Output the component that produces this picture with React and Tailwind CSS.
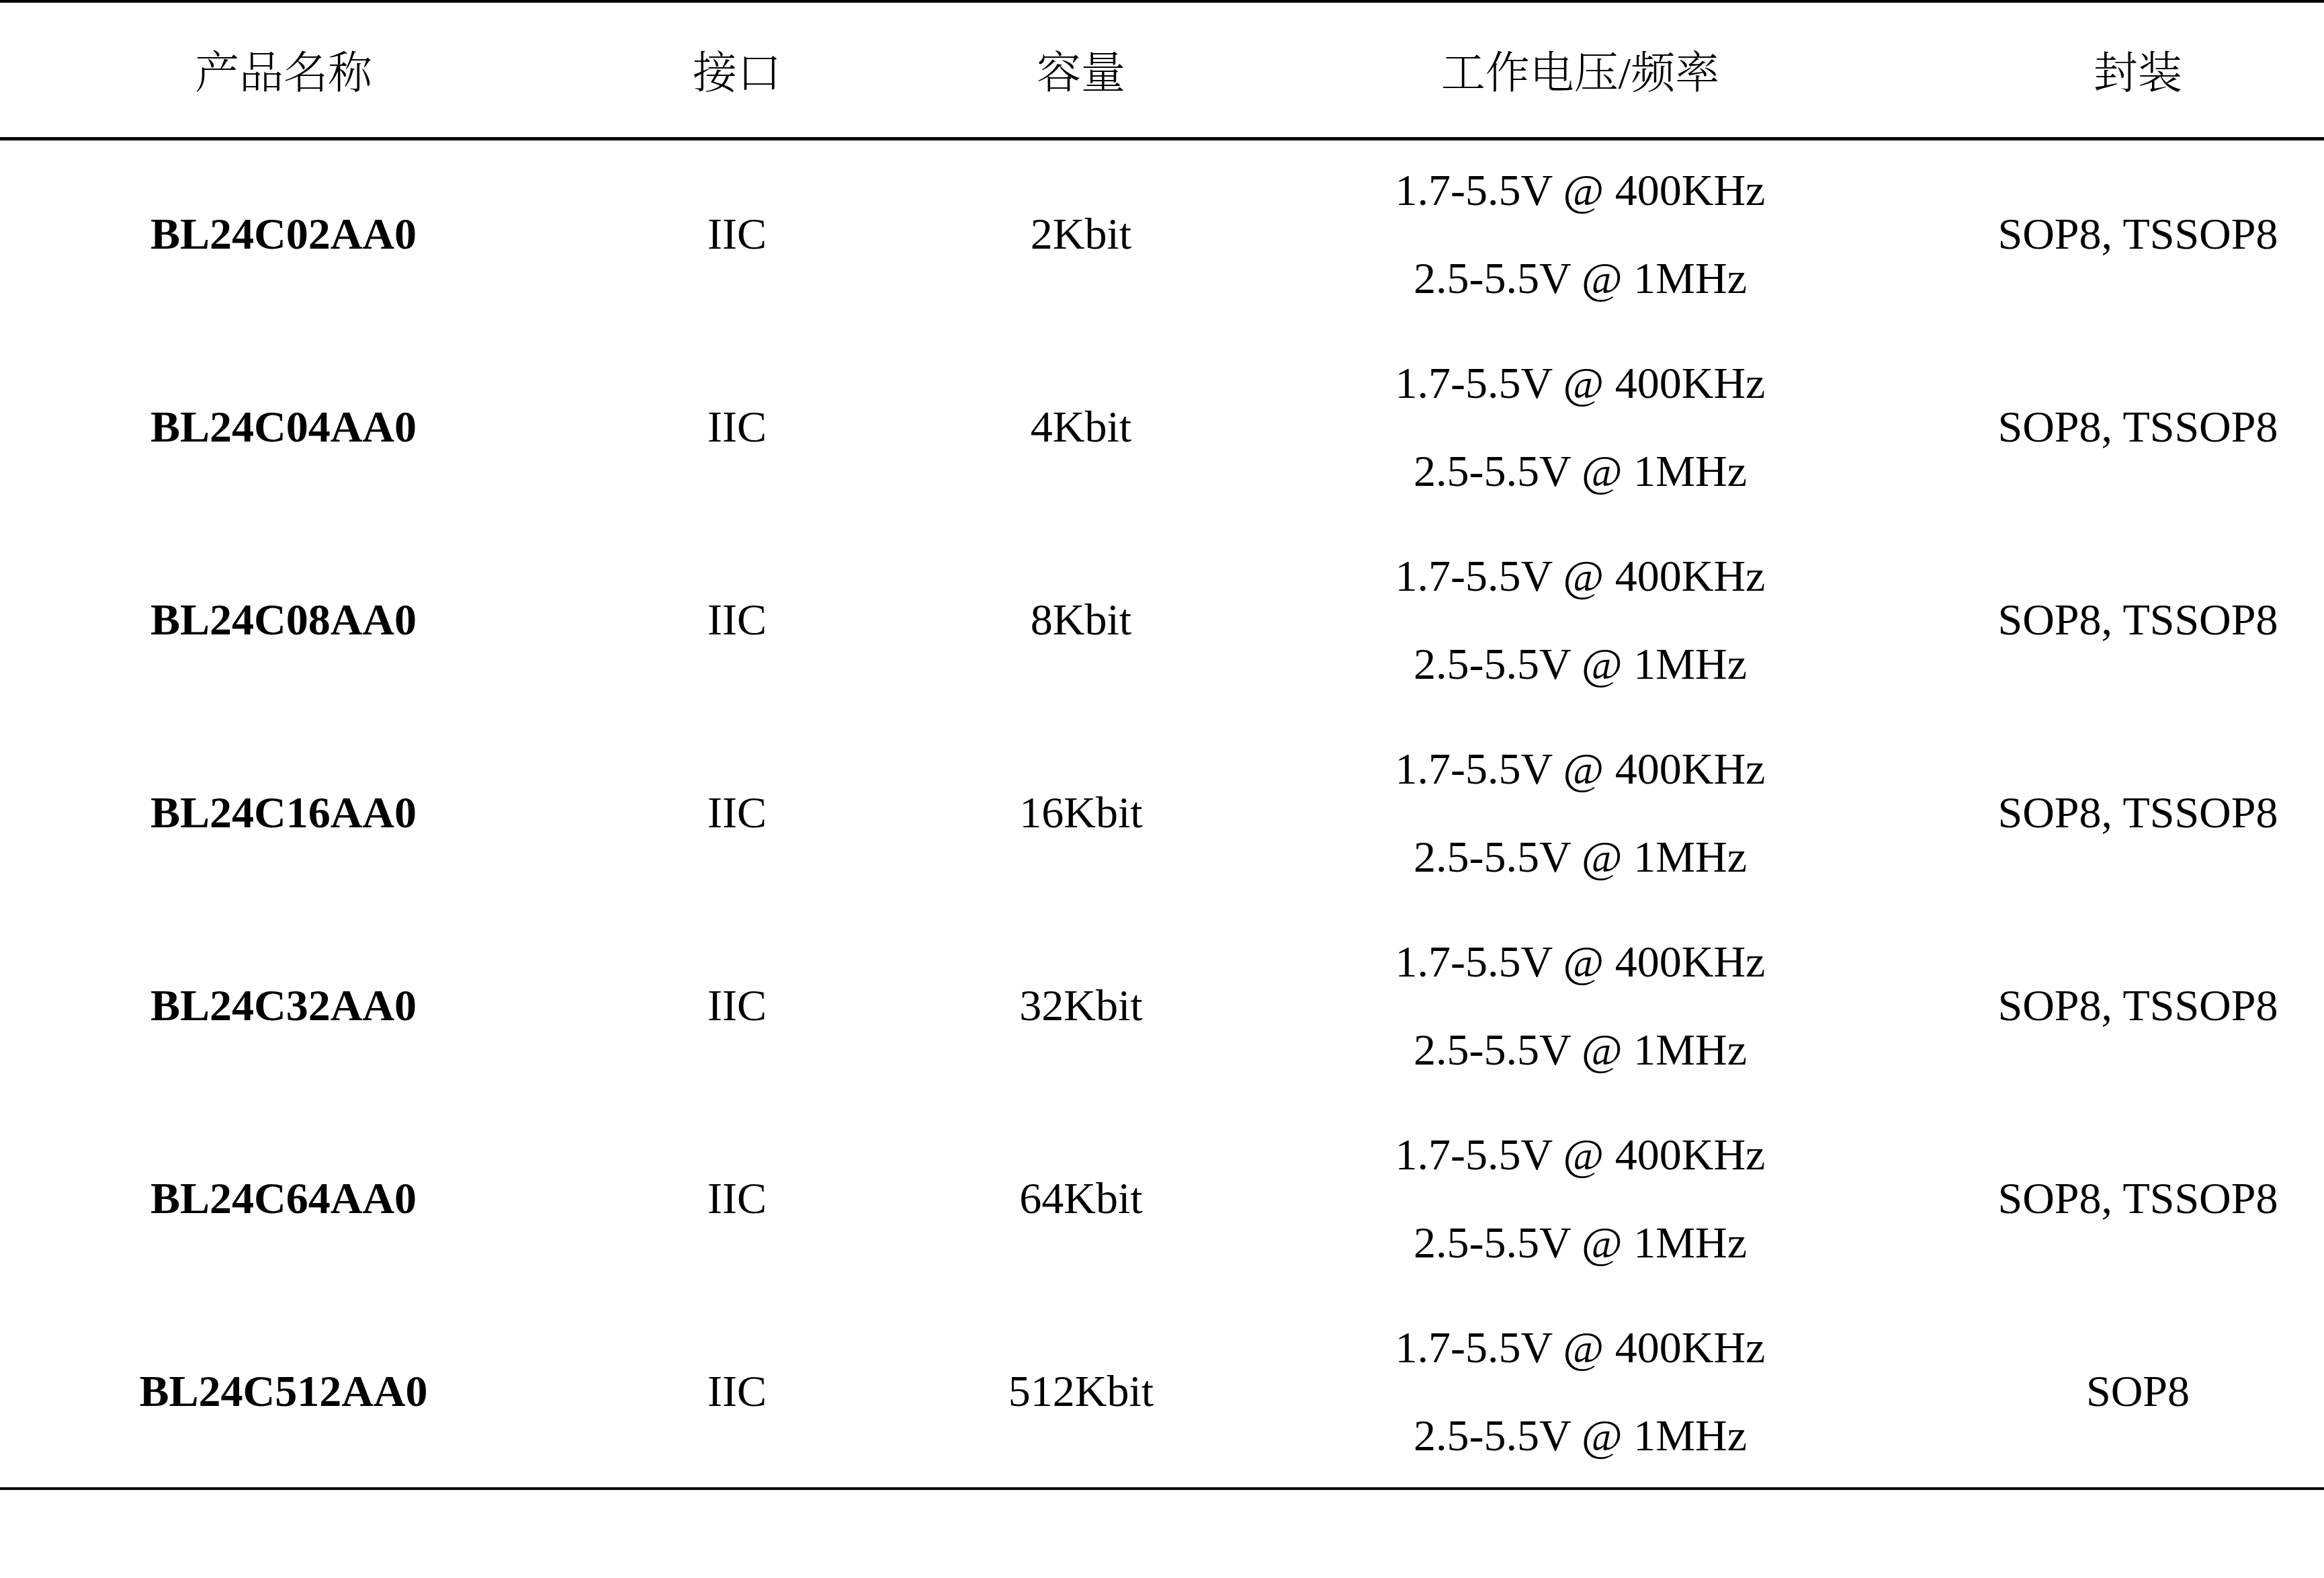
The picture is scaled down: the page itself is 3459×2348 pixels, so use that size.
import React from "react";

const rows = [
  { name: "BL24C02AA0", cap: "2Kbit", pkg: "SOP8, TSSOP8" },
  { name: "BL24C04AA0", cap: "4Kbit", pkg: "SOP8, TSSOP8" },
  { name: "BL24C08AA0", cap: "8Kbit", pkg: "SOP8, TSSOP8" },
  { name: "BL24C16AA0", cap: "16Kbit", pkg: "SOP8, TSSOP8" },
  { name: "BL24C32AA0", cap: "32Kbit", pkg: "SOP8, TSSOP8" },
  { name: "BL24C64AA0", cap: "64Kbit", pkg: "SOP8, TSSOP8" },
  { name: "BL24C512AA0", cap: "512Kbit", pkg: "SOP8" },
];

const grid =
  "grid grid-cols-[706px_644px_380px_1106px_554px] pl-[69px]";

export default function App() {
  return (
    <div
      className="w-[3459px] h-[2348px] bg-white text-black text-[66px] leading-none"
      style={{
        fontFamily:
          '"Liberation Serif", "Noto Serif CJK SC", "Noto Sans CJK SC", serif',
      }}
    >
      <div className={`${grid} h-[209px] pt-[9px] border-t-4 border-b-[5px] border-black items-center text-center font-light`}>
        <div>产品名称</div>
        <div>接口</div>
        <div>容量</div>
        <div>工作电压/频率</div>
        <div>封装</div>
      </div>
      <div className="-mt-[5px] border-b-4 border-black">
        {rows.map((r) => (
          <div
            key={r.name}
            className={`${grid} h-[287px] items-center text-center`}
          >
            <div className="font-bold">{r.name}</div>
            <div>IIC</div>
            <div>{r.cap}</div>
            <div className="flex flex-col items-center leading-[131px]">
              <span>1.7-5.5V @ 400KHz</span>
              <span>2.5-5.5V @ 1MHz</span>
            </div>
            <div>{r.pkg}</div>
          </div>
        ))}
      </div>
    </div>
  );
}
